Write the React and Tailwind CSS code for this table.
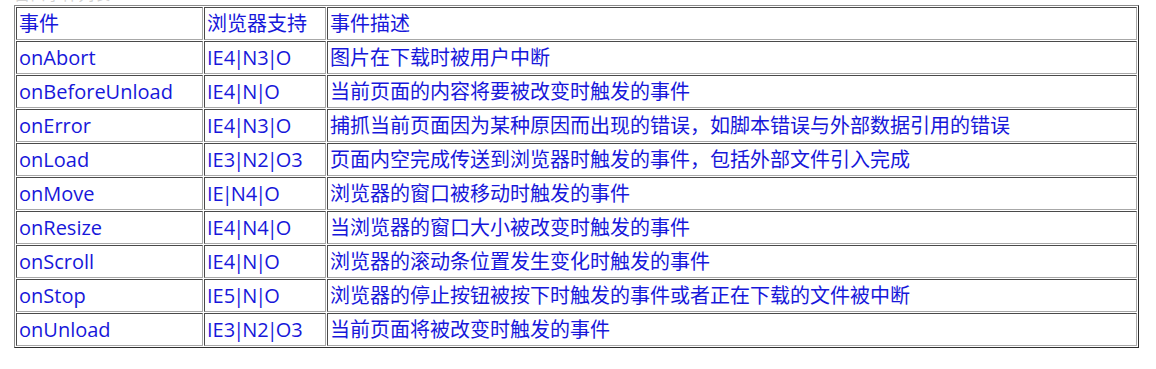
import React from "react";

const rows = [
  ["事件", "浏览器支持", "事件描述"],
  ["onAbort", "IE4|N3|O", "图片在下载时被用户中断"],
  ["onBeforeUnload", "IE4|N|O", "当前页面的内容将要被改变时触发的事件"],
  ["onError", "IE4|N3|O", "捕抓当前页面因为某种原因而出现的错误，如脚本错误与外部数据引用的错误"],
  ["onLoad", "IE3|N2|O3", "页面内空完成传送到浏览器时触发的事件，包括外部文件引入完成"],
  ["onMove", "IE|N4|O", "浏览器的窗口被移动时触发的事件"],
  ["onResize", "IE4|N4|O", "当浏览器的窗口大小被改变时触发的事件"],
  ["onScroll", "IE4|N|O", "浏览器的滚动条位置发生变化时触发的事件"],
  ["onStop", "IE5|N|O", "浏览器的停止按钮被按下时触发的事件或者正在下载的文件被中断"],
  ["onUnload", "IE3|N2|O3", "当前页面将被改变时触发的事件"],
];

const cell =
  "h-[33px] p-0 pl-[2px] pt-[1px] align-middle whitespace-nowrap border border-solid border-t-[#4a4a4a] border-l-[#4a4a4a] border-b-[#a8a8a8] border-r-[#a8a8a8]";

function Support({ text }) {
  const parts = text.split("|");
  return (
    <>
      {parts.map((p, i) => (
        <React.Fragment key={i}>
          {i > 0 && <span className="mx-[-2px]">|</span>}
          {p}
        </React.Fragment>
      ))}
    </>
  );
}

export default function App() {
  return (
    <div
      className="w-[1156px] h-[369px] bg-white overflow-hidden"
      style={{ fontFamily: '"Open Sans", "Noto Sans CJK SC", sans-serif' }}
    >
      <div className="h-[5px] overflow-hidden pl-[14px]">
        <div className="-mt-[16px] text-[16px] leading-[20px] text-[#d0d0d0]">
          窗口事件列表
        </div>
      </div>
      <table className="ml-[14px] w-[1125px] border-separate border-spacing-[1px] border border-solid border-t-[#8a8a8a] border-l-[#8a8a8a] border-b-[#2e2e2e] border-r-[#2e2e2e] text-[20px] leading-[28px] text-[#1717da]">
        <tbody>
          {rows.map((r, i) => (
            <tr key={i}>
              <td className={`${cell} w-[187px]`}>{r[0]}</td>
              <td className={`${cell} w-[122px] pl-[1px]`}>
                {i === 0 ? r[1] : <Support text={r[1]} />}
              </td>
              <td className={cell}>{r[2]}</td>
            </tr>
          ))}
        </tbody>
      </table>
    </div>
  );
}
